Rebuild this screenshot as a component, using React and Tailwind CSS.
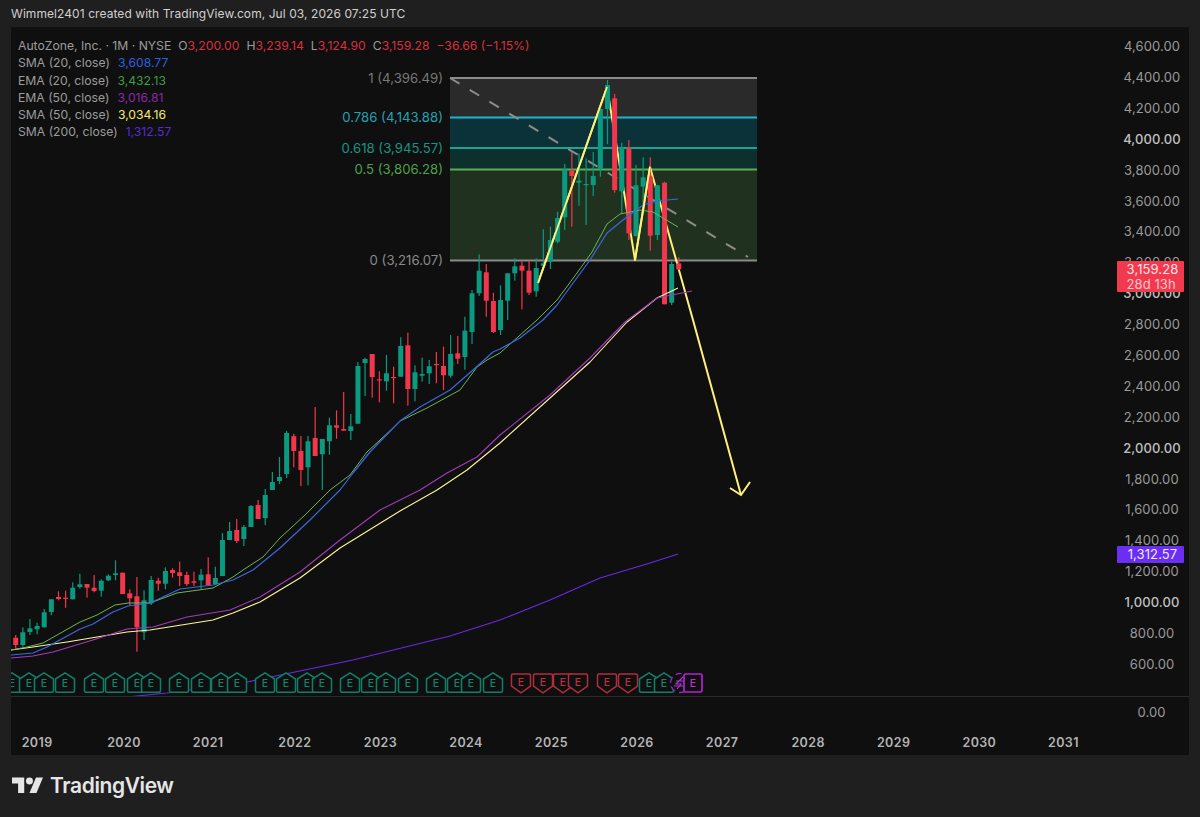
const G = "#0b9a80";
const R = "#f2364c";

// [color, bodyTop, bodyBottom, wickTop, wickBottom], one per month from Oct 2018
const candles = [
  [R, 637.7, 645, 635, 648.3], [G, 632.3, 645, 627.3, 646.7], [G, 628.3, 632, 619, 635], [G, 626, 629.3, 622.7, 634.3],
  [G, 612.3, 627.3, 609, 627.3], [G, 599.3, 612, 599.3, 615.3], [R, 597, 599, 591.3, 600.3], [R, 597.7, 598.7, 590.7, 607.7],
  [G, 587.7, 599.3, 582.3, 599.3], [G, 584.3, 587, 573.7, 588.7], [R, 584, 587.7, 584, 597.7], [R, 587.7, 591, 575, 592.3],
  [G, 580.7, 590.7, 579.3, 596.7], [G, 575.7, 580.3, 574.3, 581], [G, 573.3, 575, 560.3, 580.3], [R, 572.7, 594, 572.7, 594],
  [R, 593.3, 598.3, 589.3, 605], [R, 596.3, 627.3, 577, 651.7], [G, 600.3, 632.3, 590.3, 640], [G, 580, 603.3, 576, 605],
  [R, 580.7, 583.7, 577.7, 590.7], [G, 571, 583.7, 567.3, 589.3], [R, 570, 573, 568.3, 577.7], [R, 572.3, 576, 561.7, 586],
  [R, 575, 584, 571.7, 586], [R, 581.3, 582.7, 571.7, 586], [G, 574.7, 580.3, 569, 589.3], [R, 574.3, 585, 557.3, 585],
  [G, 578, 584, 566.7, 584], [G, 540, 576, 533, 576], [G, 531, 540, 522, 540], [R, 530, 541, 519, 543],
  [G, 527, 539, 525, 546], [G, 506, 527, 505, 527], [R, 505, 519, 500, 519], [G, 495, 518, 489, 525],
  [G, 482, 490, 472, 490], [G, 477, 481, 457, 484], [G, 433, 474, 431, 478], [R, 436.3, 451, 433.7, 467.3],
  [R, 451, 470, 436, 486], [G, 441.3, 467.3, 436, 485.3], [R, 438, 456, 407, 456], [G, 439, 454.3, 439, 490],
  [G, 425.3, 441.3, 417.7, 454.7], [R, 425.3, 427.7, 410.3, 438.7], [R, 429, 430.7, 392, 430.7], [G, 426.3, 431, 414, 440],
  [G, 366, 423.7, 362, 423.7], [G, 359, 363, 357.7, 396], [R, 354, 377, 354, 397.7], [R, 379.3, 380.3, 371.3, 402.3],
  [G, 373.3, 381.3, 355, 390.7], [R, 377, 378, 366.7, 403.3], [G, 346, 376.7, 337.3, 376.7], [R, 345.3, 389, 332.7, 405.7],
  [G, 372.3, 389, 365.3, 401.3], [G, 374, 375.7, 357.7, 381.7], [G, 366.3, 373.3, 360, 384], [R, 364, 365, 352, 383.3],
  [R, 366, 375.3, 346.7, 390], [G, 354, 375.7, 335, 377.7], [R, 353.3, 358.7, 336, 364], [G, 330.7, 357, 316.7, 369.7],
  [G, 293.3, 332, 290, 344], [G, 270.7, 293.3, 254.3, 296], [R, 272.3, 300.7, 264, 316.7], [R, 301, 332, 292.7, 333],
  [G, 300, 330, 285.3, 335], [G, 273.3, 300.7, 273.3, 320], [G, 266.3, 273.3, 258.3, 280.7], [R, 265.7, 270.7, 260.7, 309.3],
  [R, 270.7, 292.7, 260.7, 295], [G, 268, 291.3, 258.3, 296.7], [G, 263.3, 265.7, 229.3, 266.7], [G, 240, 261.7, 226.7, 269],
  [G, 218, 241.7, 211.7, 243.3], [G, 169.3, 217.3, 164, 230], [R, 170.7, 176, 152, 226.7], [G, 180.7, 182.7, 153.3, 205.7],
  [G, 184, 185, 158.3, 225], [G, 176, 185, 152, 196], [G, 109, 169.3, 106.7, 176.7], [G, 85, 109, 80, 144],
  [R, 98.3, 190, 94, 192.7], [G, 147.3, 191.3, 142.7, 213.3], [R, 147.7, 233.3, 140, 240], [G, 185.3, 236, 165, 236.7],
  [G, 177.3, 186.7, 157.3, 210], [R, 176.7, 235.7, 157.3, 250.7], [G, 185.3, 235, 185, 240], [R, 182.7, 304.3, 181.7, 304.3],
  [G, 264, 302.7, 261.7, 305], [R, 263.3, 269.3, 257.3, 270],
];

const sma20 = "11,655 33,653 47,647 80,629 93,624 113,612 128,606 150,603 180,589 213,585 233,580 253,570 280,548 310,520 340,490 353,473 370,452 400,421 420,407 450,390 473,370 493,352 500,349 520,338 543,320 557,305 590,260 607,233 623,220 643,205 657,201 678,199";
const ema20 = "11,650 27,647 43,643 80,622 97,615 115,605 128,603 150,603 177,593 213,588 233,577 243,570 263,557 280,538 305,515 330,490 350,475 367,452 393,428 400,421 427,408 460,390 477,367 487,360 500,353 537,320 557,300 577,273 592,252 607,224 620,214 640,210 653,212 678,227";
const ema50 = "11,658 33,656 53,652 93,640 127,629 153,627 187,617 230,610 260,597 300,572 340,540 380,510 420,490 447,473 477,457 500,435 550,395 590,358 625,322 657,298 692,291";
const sma50 = "11,650 33,647 67,642 127,632 150,630 213,620 233,613 260,602 300,578 340,548 400,511 437,490 467,470 500,443 550,398 590,362 627,322 657,298 678,288";
const sma200 = "127,697 167,693 247,682 290,673 353,660 450,636 500,620 550,600 600,578 650,563 678,554";

const greenE = [12, 29, 44, 65, 94, 115, 137, 151, 179, 201, 221, 237, 265, 286, 307, 322, 350, 371, 386, 408, 436, 457, 471, 493];
const redE = [521, 543, 563, 578, 607, 628];
const greenE2 = [649, 664];

const prices = [
  "4,600.00", "4,400.00", "4,200.00", "4,000.00", "3,800.00", "3,600.00", "3,400.00", "3,200.00", "3,000.00", "2,800.00", "2,600.00",
  "2,400.00", "2,200.00", "2,000.00", "1,800.00", "1,600.00", "1,400.00", "1,200.00", "1,000.00", "800.00", "600.00",
];
const strongPrices = ["4,000.00", "3,000.00", "2,000.00", "1,000.00"];
const years = ["2019", "2020", "2021", "2022", "2023", "2024", "2025", "2026", "2027", "2028", "2029", "2030", "2031"];

const studies = [
  ["SMA (20, close)", "3,608.77", "text-[#2f5fe0]"],
  ["EMA (20, close)", "3,432.13", "text-[#3f9a48]"],
  ["EMA (50, close)", "3,016.81", "text-[#8b2aa8]"],
  ["SMA (50, close)", "3,034.16", "text-[#f5ea70]"],
  ["SMA (200, close)", "1,312.57", "text-[#5a2ad0]"],
];

const fibs = [
  { y: 78, label: "1 (4,396.49)", line: "#8a8a8a", text: "#787878" },
  { y: 117.5, label: "0.786 (4,143.88)", line: "#22b3cc", text: "#22a3b5" },
  { y: 148, label: "0.618 (3,945.57)", line: "#17a594", text: "#189485" },
  { y: 169.5, label: "0.5 (3,806.28)", line: "#55b04f", text: "#4da34a" },
  { y: 260.5, label: "0 (3,216.07)", line: "#8a8a8a", text: "#8a8a8a" },
];

function Candle({ data, i }) {
  const [color, top, bottom, wickTop, wickBottom] = data;
  const x = 15.7 + 7.13 * i;
  return (
    <g fill={color}>
      <rect x={x - 0.6} y={wickTop} width="1.2" height={wickBottom - wickTop} />
      <rect x={x - 2.5} y={top} width="5" height={Math.max(bottom - top, 1.2)} />
    </g>
  );
}

function EarningsUp({ x }) {
  return (
    <g>
      <path
        d={`M${x - 9.5} 679 L${x} 672.8 L${x + 9.5} 679 V690.8 a1.5 1.5 0 0 1 -1.5 1.5 H${x - 8} a1.5 1.5 0 0 1 -1.5 -1.5 Z`}
        fill="#0f0f0f"
        stroke="#0f7f69"
        strokeWidth="1.5"
      />
      <text x={x} y="687.2" textAnchor="middle" fontSize="10.5" fontWeight="500" fill="#12866f">E</text>
    </g>
  );
}

function EarningsDown({ x }) {
  return (
    <g>
      <path
        d={`M${x - 9.5} 675.5 a1.5 1.5 0 0 1 1.5 -1.5 H${x + 8} a1.5 1.5 0 0 1 1.5 1.5 V686 L${x} 692.8 L${x - 9.5} 686 Z`}
        fill="#0f0f0f"
        stroke="#b02e3e"
        strokeWidth="1.5"
      />
      <text x={x} y="686.2" textAnchor="middle" fontSize="10.5" fontWeight="500" fill="#bb3242">E</text>
    </g>
  );
}

function Chart() {
  return (
    <svg
      viewBox="11 27 1102 669"
      className="h-[669px] w-[1102px] shrink-0"
      style={{ fontFamily: "Inter, sans-serif" }}
    >
      {/* fib zones */}
      <rect x="450" y="78" width="307" height="39.5" fill="#2a2a2a" />
      <rect x="450" y="117.5" width="307" height="30.5" fill="#0b3239" />
      <rect x="450" y="148" width="307" height="21.5" fill="#0d2f2e" />
      <rect x="450" y="169.5" width="307" height="91" fill="#20321f" />
      {fibs.map((f) => (
        <g key={f.label}>
          <line x1="450" x2="757" y1={f.y} y2={f.y} stroke={f.line} strokeWidth="1.8" />
          <text x="443" y={f.y + 4.5} textAnchor="end" fontSize="13.2" fill={f.text}>{f.label}</text>
        </g>
      ))}
      <line x1="450" y1="78" x2="748" y2="257" stroke="#8c8c8c" strokeWidth="2" strokeDasharray="11 12" />

      {/* violet line runs behind the earnings marks */}
      <polyline points={sma200} fill="none" stroke="#6a2ae8" strokeWidth="1.1" />

      {greenE.map((x) => <EarningsUp key={x} x={x} />)}
      {redE.map((x) => <EarningsDown key={x} x={x} />)}
      {greenE2.map((x) => <EarningsUp key={x} x={x} />)}

      {/* next earnings + dividend marks */}
      <circle cx="680" cy="683" r="9.5" fill="#0f0f0f" stroke="#8c2bb5" strokeWidth="1.4" strokeDasharray="6 4" />
      <path d="M683 677 L676 684 H681 L677 689 M676 681 H686 M674 686 H684" fill="none" stroke="#a638cc" strokeWidth="1.2" />
      <rect x="684" y="674" width="18" height="18" rx="1.5" fill="#0f0f0f" stroke="#b51fd6" strokeWidth="1.7" />
      <text x="693" y="687.2" textAnchor="middle" fontSize="10.5" fontWeight="500" fill="#bd2fdc">E</text>

      {/* projection: falling legs read behind the candles, rising legs over them */}
      <polyline
        points="538,283 607,87 635,260 650,167 693,320 741,495"
        fill="none"
        stroke="#fff176"
        strokeWidth="2"
        strokeLinejoin="round"
      />
      <polyline points="730,488 741,495 750,482" fill="none" stroke="#fff176" strokeWidth="2" />

      {candles.map((c, i) => <Candle key={i} data={c} i={i} />)}

      <polyline points={sma50} fill="none" stroke="#fff59d" strokeWidth="1.1" strokeLinejoin="round" />
      <polyline points={ema50} fill="none" stroke="#a33bbd" strokeWidth="1.1" strokeLinejoin="round" />
      <polyline points={ema20} fill="none" stroke="#6cb64f" strokeWidth="1" strokeLinejoin="round" />
      <polyline points={sma20} fill="none" stroke="#3b68e0" strokeWidth="1.2" strokeLinejoin="round" />

      <line x1="538" y1="283" x2="607" y2="87" stroke="#fff176" strokeWidth="1.8" />
      <line x1="635" y1="260" x2="650" y2="167" stroke="#fff176" strokeWidth="1.8" />
    </svg>
  );
}

function PriceAxis() {
  return (
    <div className="relative flex w-[76px] shrink-0 flex-col pl-[2px] pt-[4.4px] text-center text-[13px] tracking-[0.1px]">
      {prices.map((p) => (
        <div
          key={p}
          className={`flex h-[30.9px] shrink-0 items-center justify-center ${
            strongPrices.includes(p) ? "font-medium text-[#c0c0c0]" : "text-[#9a9a9a]"
          }`}
        >
          {p}
        </div>
      ))}

      {/* last price flags sit on top of the scale */}
      <div className="absolute left-[4px] top-[234px] flex h-[31px] w-[67px] flex-col items-center justify-center rounded-[1px] bg-[#f23a4f] pl-[4px] text-[13px] leading-[15px] text-[#ffe3e6]">
        <span>3,159.28</span>
        <span className="w-[52px] text-left text-[#ffc4cb]">28d 13h</span>
      </div>
      <div className="absolute left-[4px] top-[519px] flex h-[17px] w-[67px] items-center justify-center rounded-[1px] bg-[#6a2ef5] pl-[4px] text-[13px] text-[#f0e8ff]">
        1,312.57
      </div>
    </div>
  );
}

export default function App() {
  return (
    <div
      className="flex h-[817px] w-[1200px] flex-col overflow-hidden bg-[#1f1f1f]"
      style={{ fontFamily: "Inter, sans-serif" }}
    >
      {/* header */}
      <div className="flex h-[27px] shrink-0 items-center px-[11px] text-[12px] tracking-[0.07px] text-[#d0d0d0]">
        Wimmel2401 created with TradingView.com, Jul 03, 2026 07:25 UTC
      </div>

      {/* chart panel */}
      <div className="relative mx-[11px] flex h-[728px] shrink-0 flex-col bg-[#0f0f0f]">
        <div className="flex h-[670px] shrink-0 border-b border-[#2a2a2a]">
          <Chart />
          <PriceAxis />
        </div>

        <div className="flex h-[31px] shrink-0 items-center justify-end">
          <div className="w-[76px] pl-[1px] text-center text-[13px] tracking-[0.1px] text-[#9a9a9a]">0.00</div>
        </div>

        {/* time axis */}
        <div className="flex flex-1 items-center gap-[54.54px] pl-[10.6px] pt-[3px] text-[12.5px] font-semibold tracking-[0.4px] text-[#b4b4b4]">
          {years.map((y) => (
            <span key={y} className="w-[31px] shrink-0 text-center">{y}</span>
          ))}
        </div>

        {/* legend */}
        <div className="absolute left-[7px] top-[10px] flex flex-col text-[12.2px] leading-[17.3px] text-[#9c9c9c]">
          <div className="flex gap-[7px]">
            <span>AutoZone, Inc. · 1M · NYSE</span>
            <span>O<span className="text-[#d8303f]">3,200.00</span></span>
            <span>H<span className="text-[#d8303f]">3,239.14</span></span>
            <span>L<span className="text-[#d8303f]">3,124.90</span></span>
            <span>C<span className="text-[#d8303f]">3,159.28</span></span>
            <span className="text-[#d8303f]">−36.66 (−1.15%)</span>
          </div>
          {studies.map(([name, value, color]) => (
            <div key={name} className="flex gap-[8px]">
              <span>{name}</span>
              <span className={color}>{value}</span>
            </div>
          ))}
        </div>
      </div>

      {/* footer logo */}
      <div className="flex flex-1 items-center gap-[7px] pb-[1px] pl-[12px] text-[#e6e6e6]">
        <svg viewBox="0 4 35.5 18" className="h-[16.5px] w-[31px] fill-current">
          <path d="M14 22H7V11H0V4h14v18zM28 22h-8l7.5-18h8L28 22z" />
          <circle cx="20" cy="8" r="4" />
        </svg>
        <span className="text-[21px] font-semibold tracking-[-0.4px]">TradingView</span>
      </div>
    </div>
  );
}
